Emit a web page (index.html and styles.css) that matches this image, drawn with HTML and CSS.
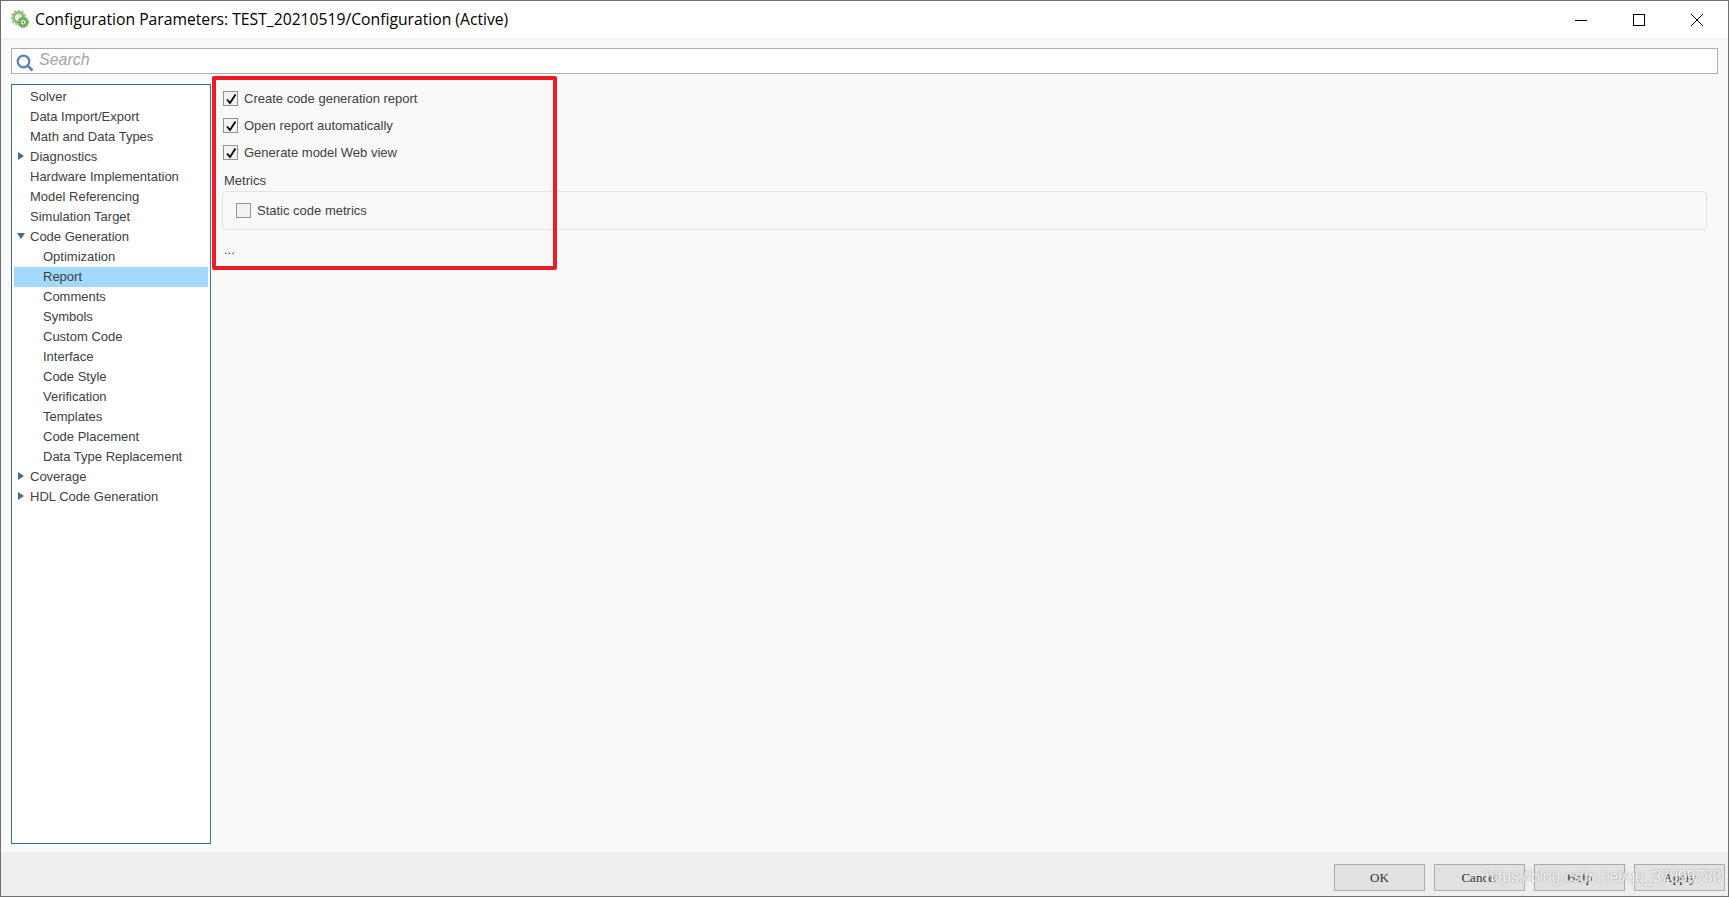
FILE: index.html
```html
<!DOCTYPE html>
<html lang="en">
<head>
<meta charset="utf-8">
<title>Configuration Parameters</title>
<link rel="stylesheet" href="styles.css">
</head>
<body>
<div class="window">
  <header class="titlebar">
    <svg class="app-icon" width="18" height="18" viewBox="0 0 18 18">
      <circle cx="7.5" cy="7.5" r="5" fill="#e6f0da" stroke="#93b97c" stroke-width="2.8"/>
      <circle cx="7.5" cy="7.5" r="7" fill="none" stroke="#a5c893" stroke-width="2" stroke-dasharray="2.4 1.6"/>
      <circle cx="12.2" cy="12.2" r="5.2" fill="#7db668" stroke="#6aa655" stroke-width="1" stroke-dasharray="2 1"/>
      <circle cx="12.2" cy="12.2" r="3" fill="#e2f0d6" stroke="#4f9a3f" stroke-width="1"/>
      <circle cx="12.2" cy="12.2" r="1" fill="#4f9a3f"/>
    </svg>
    <span class="title">Configuration Parameters: TEST_20210519/Configuration (Active)</span>
    <div class="controls">
      <svg class="ctl" width="12" height="12" viewBox="0 0 12 12"><path d="M0 6.5H12" stroke="#000" fill="none"/></svg>
      <svg class="ctl" width="12" height="12" viewBox="0 0 12 12"><rect x=".5" y=".5" width="11" height="11" stroke="#000" fill="none"/></svg>
      <svg class="ctl" width="12" height="12" viewBox="0 0 12 12"><path d="M0 0L12 12M12 0L0 12" stroke="#000" fill="none"/></svg>
    </div>
  </header>
  <div class="content">
    <div class="search">
      <svg class="search-icon" width="18" height="18" viewBox="0 0 18 18">
        <circle cx="7.5" cy="7.5" r="5.8" fill="none" stroke="#5b83ad" stroke-width="2.2"/>
        <path d="M11.8 11.8L16.5 16.5" stroke="#5b83ad" stroke-width="2.6" fill="none"/>
      </svg>
      <span class="search-text">Search</span>
    </div>
    <div class="main">
      <nav class="tree">
        <div class="row l1">Solver</div>
        <div class="row l1">Data Import/Export</div>
        <div class="row l1">Math and Data Types</div>
        <div class="row l1"><span class="arrow right"></span>Diagnostics</div>
        <div class="row l1">Hardware Implementation</div>
        <div class="row l1">Model Referencing</div>
        <div class="row l1">Simulation Target</div>
        <div class="row l1"><span class="arrow down"></span>Code Generation</div>
        <div class="row l2">Optimization</div>
        <div class="row l2 selected">Report</div>
        <div class="row l2">Comments</div>
        <div class="row l2">Symbols</div>
        <div class="row l2">Custom Code</div>
        <div class="row l2">Interface</div>
        <div class="row l2">Code Style</div>
        <div class="row l2">Verification</div>
        <div class="row l2">Templates</div>
        <div class="row l2">Code Placement</div>
        <div class="row l2">Data Type Replacement</div>
        <div class="row l1"><span class="arrow right"></span>Coverage</div>
        <div class="row l1"><span class="arrow right"></span>HDL Code Generation</div>
      </nav>
      <section class="pane">
        <label class="check"><span class="box"><svg width="14" height="14" viewBox="0 0 14 14"><path d="M3 7.5L6 11L11.5 2.5" fill="none" stroke="#000" stroke-width="1.8"/></svg></span>Create code generation report</label>
        <label class="check"><span class="box"><svg width="14" height="14" viewBox="0 0 14 14"><path d="M3 7.5L6 11L11.5 2.5" fill="none" stroke="#000" stroke-width="1.8"/></svg></span>Open report automatically</label>
        <label class="check"><span class="box"><svg width="14" height="14" viewBox="0 0 14 14"><path d="M3 7.5L6 11L11.5 2.5" fill="none" stroke="#000" stroke-width="1.8"/></svg></span>Generate model Web view</label>
        <div class="group-label">Metrics</div>
        <div class="group">
          <label class="check"><span class="box"></span>Static code metrics</label>
        </div>
        <div class="ellipsis">...</div>
        <div class="highlight"></div>
      </section>
    </div>
  </div>
  <footer class="footer">
    <button class="btn">OK</button>
    <button class="btn">Cancel</button>
    <button class="btn">Help</button>
    <button class="btn">Apply</button>
    <span class="watermark">https://blog.csdn.net/qq_37899788</span>
  </footer>
</div>
</body>
</html>
```
FILE: styles.css
```css
* { box-sizing: border-box; }
html, body { margin: 0; padding: 0; }
body {
  width: 1729px;
  height: 897px;
  overflow: hidden;
  font-family: "Liberation Sans", Arial, sans-serif;
  font-size: 13px;
  color: #404040;
}
.window {
  width: 1729px;
  height: 897px;
  display: flex;
  flex-direction: column;
  border: 1px solid #6e6e6e;
  background: #f9f9f9;
}
.titlebar {
  height: 39px;
  flex: none;
  display: flex;
  align-items: center;
  padding-left: 10px;
  background: #fff;
  border-bottom: 2px solid #f1f1f1;
}
.app-icon { flex: none; margin-top: -1px; }
.title {
  margin-left: 6px;
  margin-top: -1px;
  font-family: "Open Sans", "Noto Sans", sans-serif;
  font-size: 15.7px;
  color: #000;
  white-space: nowrap;
}
.controls {
  margin-left: auto;
  display: flex;
  align-items: center;
  gap: 46px;
  padding-right: 25px;
}
.ctl { display: block; }
.content {
  flex: 1;
  min-height: 0;
  display: flex;
  flex-direction: column;
  padding: 8px 10px 8px 10px;
}
.search {
  height: 26px;
  flex: none;
  display: flex;
  align-items: center;
  padding-left: 4px;
  background: #fff;
  border: 1px solid #aeaeae;
}
.search-icon { flex: none; margin-top: 3px; }
.search-text {
  margin-left: 5px;
  margin-top: -3px;
  font-size: 16px;
  font-style: italic;
  color: #a6a6a6;
}
.main {
  flex: 1;
  min-height: 0;
  display: flex;
  margin-top: 10px;
}
.tree {
  width: 200px;
  flex: none;
  padding: 2px;
  background: #fff;
  border: 1px solid #3f6f9f;
}
.row {
  position: relative;
  height: 20px;
  line-height: 20px;
  white-space: nowrap;
}
.l1 { padding-left: 16px; }
.l2 { padding-left: 29px; }
.selected { background: #a3d8ff; }
.arrow {
  position: absolute;
  left: 4px;
  top: 5px;
  width: 0;
  height: 0;
}
.arrow.right {
  border-top: 4.5px solid transparent;
  border-bottom: 4.5px solid transparent;
  border-left: 6px solid #4a6a8c;
}
.arrow.down {
  left: 3px;
  top: 6px;
  border-left: 4.5px solid transparent;
  border-right: 4.5px solid transparent;
  border-top: 6px solid #4a6a8c;
}
.pane {
  position: relative;
  flex: 1;
  min-width: 0;
}
.check {
  display: flex;
  align-items: center;
  height: 27px;
  white-space: nowrap;
}
.pane > .check { margin-left: 12px; }
.pane > .check:first-child { margin-top: 1px; }
.box {
  flex: none;
  width: 15px;
  height: 15px;
  margin-right: 6px;
  background: #f2f2f2;
  border: 1px solid #949494;
  display: flex;
  align-items: center;
  justify-content: center;
}
.box svg { display: block; flex: none; }
.group-label {
  margin: 6px 0 0 13px;
  height: 18px;
  line-height: 18px;
}
.group {
  margin: 1px 0 0 11px;
  width: 1485px;
  height: 39px;
  padding: 5px 0 0 13px;
  border: 1px solid #e3e3e3;
  border-radius: 4px;
}
.ellipsis {
  margin: 12px 0 0 13px;
  height: 16px;
  line-height: 16px;
}
.highlight {
  position: absolute;
  left: 1px;
  top: -8px;
  width: 345px;
  height: 194px;
  border: 4px solid #ed1c24;
  border-radius: 2px;
}
.footer {
  position: relative;
  height: 44px;
  flex: none;
  display: flex;
  justify-content: flex-end;
  gap: 9px;
  padding: 12px 3px 5px 0;
  background: #eeeeee;
}
.btn {
  width: 91px;
  height: 27px;
  padding: 0;
  background: #e1e1e1;
  border: 1px solid #adadad;
  font-family: "Liberation Serif", "Times New Roman", serif;
  font-size: 13px;
  color: #333;
}
.watermark {
  position: absolute;
  right: 7px;
  top: 16px;
  font-size: 16px;
  letter-spacing: -0.3px;
  color: rgba(255,255,255,.9);
  text-shadow: 0 0 1.5px rgba(110,110,110,.8);
  white-space: nowrap;
}
```
